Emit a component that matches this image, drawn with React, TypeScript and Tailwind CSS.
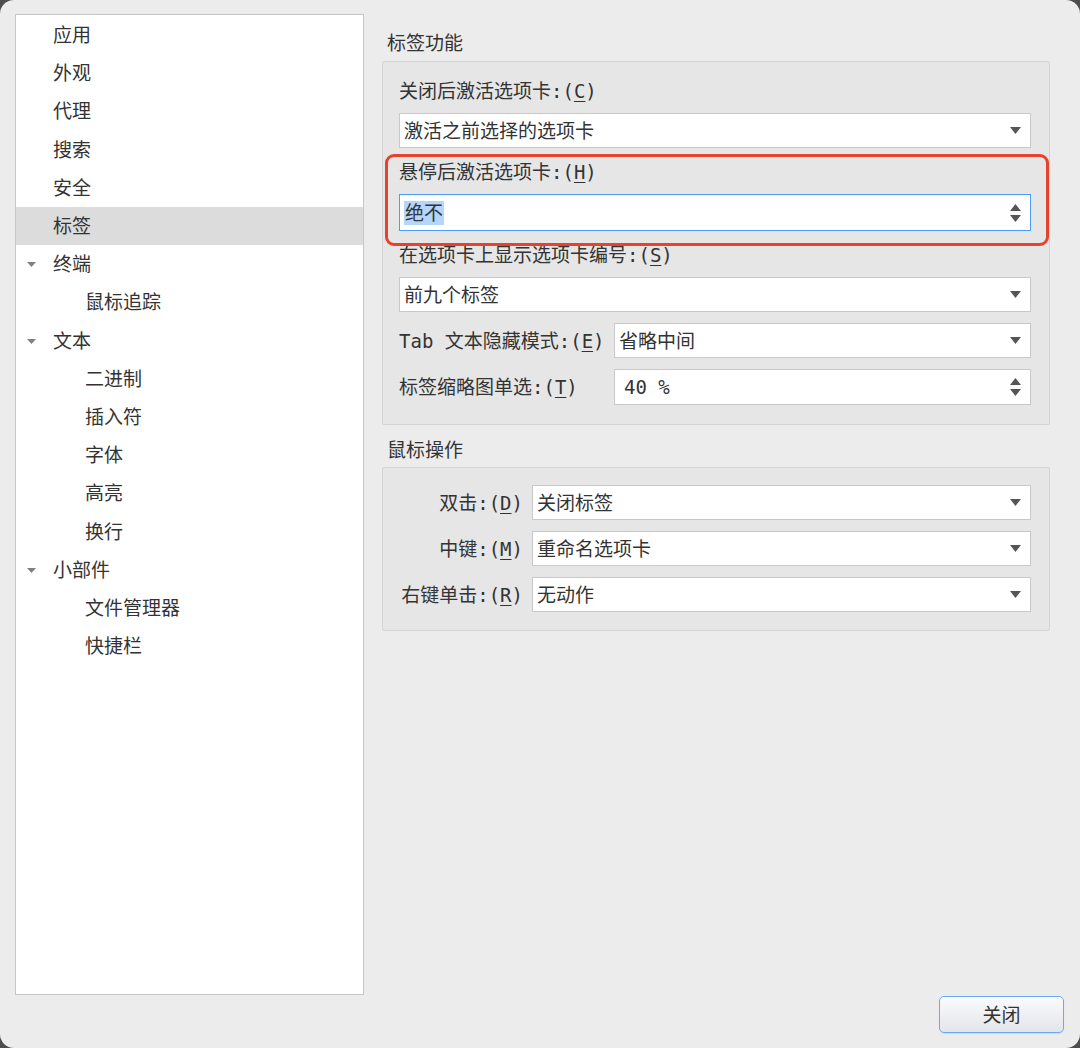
import React from "react";

const FONT = { fontFamily: '"DejaVu Sans Mono", "Noto Sans CJK SC", monospace' };

type NavItem = { label: string; level: number; expandable?: boolean; selected?: boolean };

const navItems: NavItem[] = [
  { label: "应用", level: 0 },
  { label: "外观", level: 0 },
  { label: "代理", level: 0 },
  { label: "搜索", level: 0 },
  { label: "安全", level: 0 },
  { label: "标签", level: 0, selected: true },
  { label: "终端", level: 0, expandable: true },
  { label: "鼠标追踪", level: 1 },
  { label: "文本", level: 0, expandable: true },
  { label: "二进制", level: 1 },
  { label: "插入符", level: 1 },
  { label: "字体", level: 1 },
  { label: "高亮", level: 1 },
  { label: "换行", level: 1 },
  { label: "小部件", level: 0, expandable: true },
  { label: "文件管理器", level: 1 },
  { label: "快捷栏", level: 1 },
];

function DownArrow() {
  return (
    <svg width="11" height="7" viewBox="0 0 11 7">
      <path d="M0 0 L11 0 L5.5 7 Z" fill="#555" />
    </svg>
  );
}

function SpinArrows() {
  return (
    <div className="flex flex-col gap-[4px]">
      <svg width="11" height="7" viewBox="0 0 11 7">
        <path d="M0 7 L11 7 L5.5 0 Z" fill="#555" />
      </svg>
      <svg width="11" height="7" viewBox="0 0 11 7">
        <path d="M0 0 L11 0 L5.5 7 Z" fill="#555" />
      </svg>
    </div>
  );
}

function Label({ text, mnemonic }: { text: string; mnemonic: string }) {
  return (
    <span className="whitespace-pre">
      {text}:(<span className="underline underline-offset-[3px]">{mnemonic}</span>)
    </span>
  );
}

function Combo({ value, className = "" }: { value: string; className?: string }) {
  return (
    <div
      className={`h-[35px] flex items-center justify-between bg-white border border-[#c9c9c9] pl-[4px] pr-[9px] ${className}`}
    >
      <span>{value}</span>
      <DownArrow />
    </div>
  );
}

function Spin({ children, focused = false, className = "" }: { children: React.ReactNode; focused?: boolean; className?: string }) {
  return (
    <div
      className={`flex items-center justify-between bg-white border pl-[4px] pr-[9px] ${
        focused ? "h-[37px] border-[#4c9ef5]" : "h-[36px] border-[#c9c9c9]"
      } ${className}`}
    >
      {children}
      <SpinArrows />
    </div>
  );
}

export default function App() {
  return (
    <div className="w-[1080px] h-[1048px] bg-[#4d4d4d] text-[#333] text-[19px] leading-[26px]" style={FONT}>
      <div className="w-full h-full bg-[#ececec] rounded-[14px] pt-[14px] pl-[15px] pr-[16px] flex flex-col">
        <div className="flex gap-[18px]">
          {/* Sidebar */}
          <div className="w-[349px] h-[981px] bg-white border border-[#c6c6c6] pt-[1px]">
            {navItems.map((item) => (
              <div
                key={item.label}
                className={`h-[38.2px] flex items-center relative ${item.selected ? "bg-[#dcdcdc]" : ""} ${
                  item.level === 1 ? "pl-[69px]" : "pl-[37px]"
                }`}
              >
                {item.expandable && (
                  <svg className="absolute left-[11px] top-[17px]" width="9" height="5" viewBox="0 0 9 5">
                    <path d="M0 0 L9 0 L4.5 5 Z" fill="#808080" />
                  </svg>
                )}
                {item.label}
              </div>
            ))}
          </div>

          {/* Settings */}
          <div className="w-[668px]">
            <div className="mt-[16px] pl-[5px]">标签功能</div>
            <div className="relative mt-[5px] bg-[#e6e6e6] border border-[#d4d4d4] rounded-[2px] pt-[16px] pb-[19px] pl-[16px] pr-[18px]">
              <Label text="关闭后激活选项卡" mnemonic="C" />
              <Combo value="激活之前选择的选项卡" className="mt-[9px]" />

              <div className="mt-[11px]">
                <Label text="悬停后激活选项卡" mnemonic="H" />
              </div>
              <Spin focused className="mt-[9px]">
                <span className="bg-[#b5d5fd] px-[1px] leading-[24px]">绝不</span>
              </Spin>

              <div className="mt-[11px]">
                <Label text="在选项卡上显示选项卡编号" mnemonic="S" />
              </div>
              <Combo value="前九个标签" className="mt-[9px]" />

              <div className="mt-[11px] flex items-center">
                <div className="w-[215px] shrink-0">
                  <Label text="Tab 文本隐藏模式" mnemonic="E" />
                </div>
                <Combo value="省略中间" className="flex-1" />
              </div>

              <div className="mt-[11px] flex items-center">
                <div className="w-[215px] shrink-0">
                  <Label text="标签缩略图单选" mnemonic="T" />
                </div>
                <Spin className="flex-1">
                  <span className="pl-[5px]">40 %</span>
                </Spin>
              </div>

              {/* highlight */}
              <div className="absolute left-[2px] top-[92px] w-[664px] h-[92px] border-[3px] border-[#e6432d] rounded-[9px]" />
            </div>

            <div className="mt-[12px] pl-[5px]">鼠标操作</div>
            <div className="mt-[4px] bg-[#e6e6e6] border border-[#d4d4d4] rounded-[2px] pt-[17px] pb-[18px] pl-[16px] pr-[18px] flex flex-col gap-[11px]">
              {[
                { text: "双击", m: "D", v: "关闭标签" },
                { text: "中键", m: "M", v: "重命名选项卡" },
                { text: "右键单击", m: "R", v: "无动作" },
              ].map((r) => (
                <div key={r.m} className="flex items-center">
                  <div className="w-[124px] shrink-0 text-right">
                    <Label text={r.text} mnemonic={r.m} />
                  </div>
                  <Combo value={r.v} className="flex-1 ml-[9px]" />
                </div>
              ))}
            </div>
          </div>
        </div>

        <div className="flex justify-end mt-[1px]">
          <button className="w-[125px] h-[37px] rounded-[5px] border border-[#6aaaf3] bg-gradient-to-b from-[#fbfbfd] to-[#e4e5ea] text-[#333] shadow-[0_1px_1px_rgba(0,0,0,0.08)]">
            关闭
          </button>
        </div>
      </div>
    </div>
  );
}
